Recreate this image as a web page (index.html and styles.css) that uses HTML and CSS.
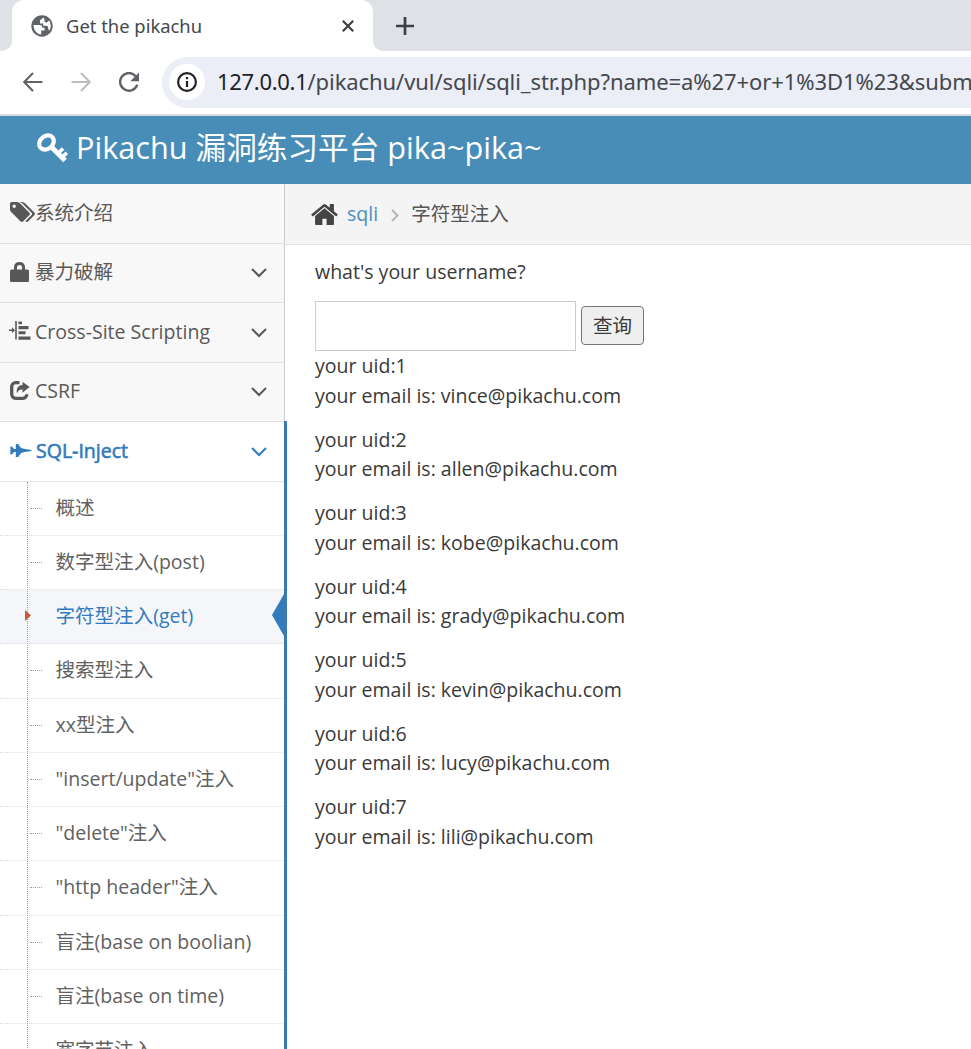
FILE: index.html
```html
<!DOCTYPE html>
<html lang="zh-CN">
<head>
<meta charset="utf-8">
<title>Get the pikachu</title>
<link rel="stylesheet" href="styles.css">
</head>
<body>
<div class="tabstrip">
  <div class="tab-prev"></div>
  <div class="tab">
    <svg class="globe" viewBox="0 0 22 22"><circle cx="11" cy="11" r="10.700" fill="#5f6368"/><path d="M12.500 2.500L9 5.300v3.200h3.200v2.300h3.300c1.200 0 1.700 1.200 1.700 3.200l1.200 1.700c2-3 1.700-7.500-.4-10.200l-2.500 2.300-2-1.200V4.300z" fill="#fff"/><path d="M2.600 10h6.200c1.700 0 2.500 1 2.500 2.700h2.200v2.800h-3.300v3.900c-4 0-7.800-4-7.600-9.400z" fill="#fff"/></svg>
    <span class="tab-title">Get the pikachu</span>
    <svg class="close" viewBox="0 0 12 12"><path d="M.8.8l10.400 10.400M11.200.8L.8 11.200" stroke="#3c4043" stroke-width="2.200"/></svg>
  </div>
  <div class="tab-rest"><svg class="plus" viewBox="0 0 18 18"><path d="M9 0v18M0 9h18" stroke="#3c4043" stroke-width="2.700"/></svg></div>
</div>
<div class="toolbar">
  <svg class="nav-icon back" viewBox="0 0 20 20" fill="none" stroke="#5f6368" stroke-width="2.100"><path d="M19.500 10H1.500M10 1L1.200 10 10 19"/></svg>
  <svg class="nav-icon forward" viewBox="0 0 20 20" fill="none" stroke="#bbbdbf" stroke-width="2.100"><path d="M.5 10h18M10 1l8.800 9L10 19"/></svg>
  <svg class="nav-icon reload" viewBox="0 0 20 20"><path d="M16.700 4.200A8.800 8.800 0 1 0 18.300 12.600" fill="none" stroke="#5f6368" stroke-width="2.400"/><path d="M20 .5v8.700h-8.700z" fill="#5f6368"/></svg>
  <div class="omnibox">
    <span class="site-info"><svg viewBox="0 0 20 20"><circle cx="10" cy="10" r="8.900" fill="none" stroke="#202124" stroke-width="2.200"/><path d="M10 9v6M10 5v2.300" stroke="#202124" stroke-width="2.200"/></svg></span>
    <span class="url"><b>127.0.0.1</b>/pikachu/vul/sqli/sqli_str.php?name=a%27+or+1%3D1%23&amp;submit</span>
  </div>
</div>
<header class="banner">
  <svg class="key" viewBox="0 0 30 30"><g fill="none" stroke="#fff"><ellipse cx="9.500" cy="9.500" rx="8" ry="6.300" transform="rotate(-40 9.500 9.500)" stroke-width="4.200"/><path d="M13.500 13L28 27.500" stroke-width="5"/><path d="M20.500 21L26 15.500M25 24.500L29.800 19.700" stroke-width="3.600"/></g></svg>
  <h1>Pikachu 漏洞练习平台 pika~pika~</h1>
</header>
<div class="page">
  <nav class="sidebar">
    <a class="item"><svg class="ico" viewBox="0 128 1900 1515"><path fill-rule="evenodd" d="M448 448q0-53-37.500-90.500t-90.500-37.500-90.500 37.500-37.500 90.500 37.500 90.500 90.500 37.500 90.500-37.500 37.500-90.500zm1067 576q0 53-37 90l-491 492q-39 37-91 37-53 0-90-37l-715-716q-38-37-64.500-101t-26.500-117v-416q0-52 38-90t90-38h416q53 0 117 26.500t102 64.500l715 714q37 39 37 91zm384 0q0 53-37 90l-491 492q-39 37-91 37-36 0-59-14t-53-45l470-470q37-37 37-90 0-52-37-91l-715-714q-38-38-102-64.500t-117-26.500h224q53 0 117 26.500t102 64.500l715 714q37 39 37 91z"/></svg><span>系统介绍</span></a>
    <a class="item"><svg class="ico lock" viewBox="0 0 19 20"><path d="M5.500 9V5.500Q5.500 1.500 9.500 1.500T13.500 5.500V9" fill="none" stroke="#585858" stroke-width="3"/><rect y="7.500" width="19" height="12.500" rx="1.500"/></svg><span>暴力破解</span><svg class="chev" viewBox="0 0 16 10"><path d="M1 1l7 7 7-7"/></svg></a>
    <a class="item"><svg class="ico lines" viewBox="0 0 22 20"><path d="M0 8.500h3V6.200L6 9.300 3 12.200V10H0zM6.200 0h1.600v18.500H6.200zM9.500.6h3.500v2.700H9.500zM9.500 5.100h10V8.200h-10zM9.500 10.300h7v3h-7zM9.500 15.500h12v3.200h-12z"/></svg><span>Cross-Site Scripting</span><svg class="chev" viewBox="0 0 16 10"><path d="M1 1l7 7 7-7"/></svg></a>
    <a class="item"><svg class="ico share" viewBox="0 0 20 19"><path d="M9.500 1.700H5.500A4 4 0 0 0 1.700 5.500v7.800a4 4 0 0 0 3.800 4h7.500a4 4 0 0 0 3.800-4" fill="none" stroke="#585858" stroke-width="3.300"/><path d="M12.500.8L19.600 6l-7.100 5.700V8.500C9.500 8.300 8 9.500 7 12.500 6 7.500 8 4.200 12.500 3.900z"/></svg><span>CSRF</span><svg class="chev" viewBox="0 0 16 10"><path d="M1 1l7 7 7-7"/></svg></a>
    <div class="group">
      <a class="item open"><svg class="ico jet" viewBox="0 0 1920 1280"><path d="M1920 640q-1 32-288 96l-352 32-224 64h-64l-293 352h69q26 0 45 4.500t19 11.500-19 11.500-45 4.500h-320v-32h64v-416h-160l-192 224h-96l-32-32v-192h32v-32h128v-8l-192-24v-128l192-24v-8h-128v-32h-32v-192l32-32h96l192 224h160v-416h-64v-32h320q26 0 45 4.500t19 11.500-19 11.500-45 4.500h-69l293 352h64l224 64 352 32q261 58 287 93z"/></svg><span>SQL-Inject</span><svg class="chev" viewBox="0 0 16 10"><path d="M1 1l7 7 7-7"/></svg></a>
      <ul class="submenu">
        <li>概述</li>
        <li>数字型注入(post)</li>
        <li class="active">字符型注入(get)<svg class="caret" viewBox="0 0 6 11"><path d="M0 0l6 5.500L0 11z"/></svg><svg class="notch" viewBox="0 0 12 42"><path d="M12 0v42L0 21z"/></svg></li>
        <li>搜索型注入</li>
        <li>xx型注入</li>
        <li>"insert/update"注入</li>
        <li>"delete"注入</li>
        <li>"http header"注入</li>
        <li>盲注(base on boolian)</li>
        <li>盲注(base on time)</li>
        <li>宽字节注入</li>
      </ul>
    </div>
  </nav>
  <main class="main">
    <div class="breadcrumb">
      <svg class="home" viewBox="13 253 1638 1283"><path d="M1408 992v480q0 26-19 45t-45 19h-384v-384h-256v384h-384q-26 0-45-19t-19-45v-480q0-1 .5-3t.5-3l575-474 575 474q1 2 1 6zm223-69l-62 74q-8 9-21 11h-3q-13 0-21-7l-692-577-692 577q-12 8-24 7-13-2-21-11l-62-74q-8-10-7-23.500t11-21.500l719-599q32-26 76-26t76 26l244 204v-195q0-14 9-23t23-9h192q14 0 23 9t9 23v408l219 182q10 8 11 21.500t-7 23.500z"/></svg>
      <a>sqli</a>
      <svg class="sep" viewBox="0 0 8 13"><path d="M1 1l5.500 5.500L1 12"/></svg>
      <span>字符型注入</span>
    </div>
    <div class="content">
      <p class="ask">what's your username?</p>
      <form class="query"><input class="field" type="text"><button class="submit" type="button">查询</button></form>
      <p>your uid:1<br>your email is: vince@pikachu.com</p>
      <p>your uid:2<br>your email is: allen@pikachu.com</p>
      <p>your uid:3<br>your email is: kobe@pikachu.com</p>
      <p>your uid:4<br>your email is: grady@pikachu.com</p>
      <p>your uid:5<br>your email is: kevin@pikachu.com</p>
      <p>your uid:6<br>your email is: lucy@pikachu.com</p>
      <p>your uid:7<br>your email is: lili@pikachu.com</p>
    </div>
  </main>
</div>
</body>
</html>
```
FILE: styles.css
```css
* { box-sizing: border-box; }
html, body { height: 100%; }
body {
  margin: 0;
  height: 1049px;
  overflow: hidden;
  display: flex;
  flex-direction: column;
  background: #fff;
  color: #393939;
  font-family: "Open Sans", "Noto Sans CJK SC", sans-serif;
  font-size: 19.55px;
  line-height: 29.25px;
}
svg { display: block; flex: none; }

/* browser chrome */
.tabstrip { display: flex; flex: none; height: 51px; background: #fff; }
.tab-prev { width: 12px; background: #dee1e6; border-bottom-right-radius: 10px; }
.tab {
  width: 361px;
  display: flex;
  align-items: center;
  padding: 0 19px 0 19px;
  background: linear-gradient(#dee1e6, #dee1e6) top / 100% 14px no-repeat;
  position: relative;
  z-index: 0;
}
.tab::before {
  content: "";
  position: absolute;
  inset: 0;
  z-index: -1;
  background: #fff;
  border-radius: 12px 12px 0 0;
}
.globe { width: 22px; height: 22px; }
.tab-title {
  flex: 1;
  margin-left: 13px;
  font-family: "Noto Sans", sans-serif;
  font-size: 18.4px;
  color: #45484c;
}
.close { width: 12px; height: 12px; }
.tab-rest { flex: 1; background: #dee1e6; border-bottom-left-radius: 10px; padding: 17px 0 0 23px; }
.plus { width: 18px; height: 18px; }
.toolbar {
  flex: none;
  display: flex;
  align-items: center;
  height: 65px;
  padding: 0 0 1px 23px;
  border-bottom: 2px solid #d9dbe3;
}
.nav-icon { width: 20px; height: 20px; }
.back, .forward { margin-right: 28px; }
.reload { margin-right: 23px; }
.omnibox {
  flex: 1;
  min-width: 0;
  overflow: hidden;
  display: flex;
  align-items: center;
  height: 51px;
  padding-left: 7px;
  background: #ebedf7;
  border-radius: 26px 0 0 26px;
}
.site-info {
  flex: none;
  width: 36px;
  height: 36px;
  border-radius: 50%;
  background: #fff;
  display: flex;
  align-items: center;
  justify-content: center;
}
.site-info svg { width: 20px; height: 20px; }
.url {
  margin-left: 12px;
  white-space: nowrap;
  font-family: "Noto Sans", sans-serif;
  font-size: 22px;
  letter-spacing: -.08px;
  color: #45484d;
}
.url b { font-weight: 400; color: #202124; letter-spacing: -.3px; }

/* application header */
.banner {
  flex: none;
  display: flex;
  align-items: center;
  height: 68px;
  padding: 0 0 4px 37px;
  background: #488db8;
  color: #fff;
}
.key { width: 30px; height: 30px; overflow: visible; }
.banner h1 { margin: -2px 0 0 9px; font-size: 30.650px; line-height: 40px; font-weight: 400; white-space: nowrap; }

.page { flex: 1; min-height: 0; display: flex; }

/* side navigation */
.sidebar { width: 285px; flex: none; position: relative; z-index: 1; color: #585858; }
.item {
  display: flex;
  align-items: center;
  height: 59.5px;
  padding: 0 17px 2px 10px;
  background: #f8f8f8;
  border-bottom: 1px solid #e2e2e2;
  border-right: 1px solid #ccc;
}
.item span { margin-left: 5px; flex: 1; white-space: nowrap; }
.ico { width: 25px; height: 20px; fill: currentColor; }
.ico + span { margin-left: 0; }
.lock { width: 19px; }
.lock + span { margin-left: 6px; }
.lines { width: 22px; margin-left: -1px; }
.lines + span { margin-left: 4px; }
.share { width: 20px; height: 19px; }
.share + span { margin-left: 5px; }
.jet { width: 22px; height: 15px; }
.jet + span { margin-left: 4px; }
.chev { width: 16px; height: 10px; margin-top: 3px; fill: none; stroke: currentColor; stroke-width: 2; }
.group { width: 287px; border-right: 3px solid #3a7ab3; margin-top: -1px; }
.open { background: #fff; color: #327bbd; border-right: 0; height: 60.500px; border-top: 1px solid #e2e2e2; border-bottom-color: #dbe5eb; }
.open span { font-weight: 400; -webkit-text-stroke: .6px currentColor; }
.submenu { list-style: none; margin: 0; padding: 0; position: relative; }
.submenu::before {
  content: "";
  position: absolute;
  left: 27px;
  top: 0;
  bottom: 0;
  border-left: 1px dotted #8ba3b5;
  z-index: 1;
}
.submenu li {
  position: relative;
  height: 54.250px;
  padding: 11px 0 0 55.500px;
  border-bottom: 1px dotted #d5dfe7;
  color: #616161;
  white-space: nowrap;
}
.submenu li::before {
  content: "";
  position: absolute;
  left: 30px;
  top: 26px;
  width: 12px;
  border-top: 1px dotted #8ba3b5;
}
.submenu .active { background: #f4f6fa; color: #327bbd; }
.submenu .active::before { display: none; }
.caret { position: absolute; left: 25px; top: 20px; width: 6px; height: 11px; fill: #c8593b; z-index: 2; }
.notch { position: absolute; right: 0; top: 4px; width: 12px; height: 42px; fill: #327bbd; }

/* content column */
.main { flex: 1; min-width: 0; }
.breadcrumb {
  display: flex;
  align-items: center;
  height: 61px;
  padding: 0 0 0 26px;
  background: #f4f4f4;
  border-bottom: 1px solid #e2e2e2;
  color: #555;
}
.home { width: 27px; height: 21px; fill: #444; }
.breadcrumb a { margin-left: 9px; color: #4c8fbd; }
.sep { width: 8px; height: 13px; margin: 3px 12px 0 13px; fill: none; stroke: #b2b6bf; stroke-width: 2; }
.content { padding: 12px 0 0 30px; }
.content p { margin: 0 0 15px; white-space: nowrap; }
.query { display: flex; align-items: center; gap: 5px; height: 50px; }
.field { width: 261px; height: 50px; border: 1px solid #ccc; padding: 0 6px; font: inherit; }
.submit {
  width: 63px;
  height: 39px;
  margin-top: -1px;
  padding: 0;
  border: 1px solid #767676;
  border-radius: 4px;
  background: #efefef;
  color: #393939;
  font: inherit;
}
```
